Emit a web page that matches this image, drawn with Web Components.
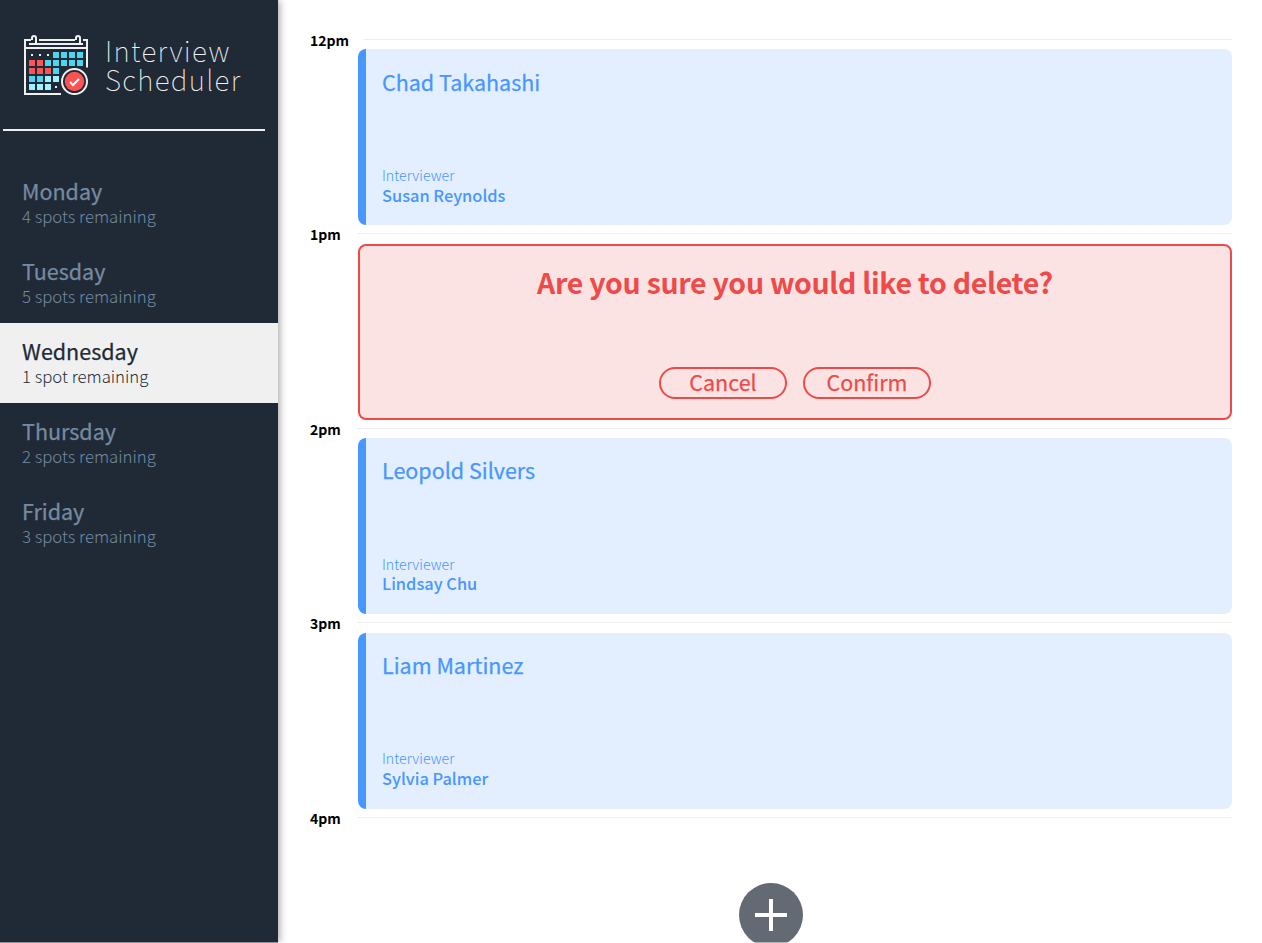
<!DOCTYPE html>
<html lang="en">
<head>
<meta charset="utf-8">
<title>Interview Scheduler</title>
<style>
  body { margin: 0; height: 943px; overflow: hidden; background: #fff; font-family: "Noto Sans CJK JP", "Noto Sans", sans-serif; }
</style>
</head>
<body>
<scheduler-app>
  <scheduler-sidebar slot="sidebar">
    <day-item spots="4 spots remaining">Monday</day-item>
    <day-item spots="5 spots remaining">Tuesday</day-item>
    <day-item spots="1 spot remaining" selected>Wednesday</day-item>
    <day-item spots="2 spots remaining">Thursday</day-item>
    <day-item spots="3 spots remaining">Friday</day-item>
  </scheduler-sidebar>
  <time-slot time="12pm"><appointment-card interviewer="Susan Reynolds">Chad Takahashi</appointment-card></time-slot>
  <time-slot time="1pm"><confirm-card>Are you sure you would like to delete?</confirm-card></time-slot>
  <time-slot time="2pm"><appointment-card interviewer="Lindsay Chu">Leopold Silvers</appointment-card></time-slot>
  <time-slot time="3pm"><appointment-card interviewer="Sylvia Palmer">Liam Martinez</appointment-card></time-slot>
  <time-slot time="4pm"><add-button></add-button></time-slot>
</scheduler-app>
<script>
const define = (name, html, setup) => customElements.define(name, class extends HTMLElement {
  connectedCallback() {
    if (this.shadowRoot) return;
    const root = this.attachShadow({ mode: "open" });
    root.innerHTML = html;
    if (setup) setup(this, root);
  }
});

define("scheduler-app", `
<style>
  :host { position: relative; display: flex; height: 943px; overflow: hidden; }
  :host::after { content: ""; position: absolute; left: 0; right: 0; bottom: 0; height: 1px; background: rgba(255,255,255,.5); }
  main { flex: 1; padding: 31.06px 30px 0 32px; }
</style>
<slot name="sidebar"></slot><main><slot></slot></main>`);

define("scheduler-sidebar", `
<style>
  :host { display: block; flex: none; width: 278px; background: #202a36; box-shadow: 1px 0 8px rgba(0,0,0,.4); }
  hr { margin: 33px 13px 32px 3px; border: 0; height: 2px; background: #f0f0f0; }
  nav { display: block; }
</style>
<scheduler-logo></scheduler-logo><hr><nav><slot></slot></nav>`);

define("scheduler-logo", `
<style>
  :host { display: flex; padding: 34px 0 0 23px; height: 62px; box-sizing: content-box; }
  svg { flex: none; }
  .name { margin: 2px 0 0 16px; color: #f0f0f0; font-weight: 100; font-size: 28px; line-height: 29px; letter-spacing: 1.3px; white-space: nowrap; }
  .name span { display: block; }
</style>
<svg width="66" height="62" viewBox="23 34 66 62" fill="none">
  <g stroke="#f0f0f0" stroke-width="2">
    <path d="M31 40H25V94H61M39 40H75M83 40H87V67.5M29 44H83M25 48H87"/>
    <path d="M32 40V38a2 2 0 0 1 4 0V43M76 40V38a2 2 0 0 1 4 0V43"/>
    <circle cx="74.5" cy="81.5" r="12.5"/>
  </g>
  <path fill="#f0f0f0" d="M31 54h2v2h-2zM39 54h2v2h-2zM47 54h2v2h-2zM55 86h2v2h-2z"/>
  <path fill="#4dd4ee" d="M53 52h6v6h-6zM61 52h6v6h-6zM69 52h6v6h-6zM77 52h6v6h-6zM45 60h6v6h-6zM53 60h6v6h-6zM61 60h6v6h-6zM69 60h6v6h-6zM77 60h6v6h-6zM53 68h6v6h-6zM29 76h6v6h-6zM37 76h6v6h-6z"/>
  <path fill="#a0f0ff" d="M45 76h6v6h-6zM53 76h6v6h-6zM29 84h6v6h-6zM37 84h6v6h-6zM45 84h6v6h-6z"/>
  <path fill="#ff5252" d="M29 60h6v6h-6zM37 60h6v6h-6zM29 68h6v6h-6zM37 68h6v6h-6zM45 68h6v6h-6z"/>
  <circle cx="74.5" cy="81.5" r="9.7" fill="#ff5252"/>
  <path d="M70 82l3 3 6-6" stroke="#fff" stroke-width="2"/>
</svg>
<div class="name"><span>Interview</span><span>Scheduler</span></div>`);

define("day-item", `
<style>
  :host { display: block; height: 80px; box-sizing: border-box; padding: 13px 0 0 22px; color: #768aa1; white-space: nowrap; }
  :host([selected]) { background: #f0f0f0; color: #202a36; }
  .day { font-size: 21.5px; font-weight: 400; line-height: 30px; -webkit-text-stroke: .25px currentColor; }
  .spots { font-size: 16.75px; font-weight: 300; line-height: 20px; }
</style>
<div class="day"><slot></slot></div><div class="spots"></div>`,
(el, root) => root.querySelector(".spots").textContent = el.getAttribute("spots"));

define("time-slot", `
<style>
  :host { display: block; }
  header { display: flex; height: 18.39px; }
  .time { flex: none; min-width: 47px; box-sizing: border-box; padding-right: 15px; margin-top: -1px; color: #000; font-size: 14px; font-weight: 700; line-height: 20px; white-space: nowrap; }
  .line { flex: 1; height: 1px; margin-top: 8px; background: #eee; }
  .body { padding-left: 48px; }
</style>
<header><div class="time"></div><div class="line"></div></header><div class="body"><slot></slot></div>`,
(el, root) => root.querySelector(".time").textContent = el.getAttribute("time"));

define("appointment-card", `
<style>
  :host { display: flex; flex-direction: column; justify-content: space-between; height: 176px; box-sizing: border-box; padding: 15.2px 16px 20.8px; border-left: 8px solid #4896ff; border-radius: 8px; background: #e3efff; color: #4896ff; white-space: nowrap; }
  .student { font-size: 21.5px; font-weight: 400; line-height: 34px; -webkit-text-stroke: .25px currentColor; }
  .label { font-size: 14.2px; font-weight: 300; line-height: 20px; }
  .interviewer { margin-top: -.4px; font-size: 16.4px; font-weight: 500; line-height: 20px; }
</style>
<div class="student"><slot></slot></div>
<div><div class="label">Interviewer</div><div class="interviewer"></div></div>`,
(el, root) => root.querySelector(".interviewer").textContent = el.getAttribute("interviewer"));

define("confirm-card", `
<style>
  :host { display: flex; flex-direction: column; align-items: center; justify-content: space-between; height: 176px; box-sizing: border-box; padding: 16px 0 19px; border: 2px solid #ee4a49; border-radius: 8px; background: #fbe3e3; color: #ee4a49; white-space: nowrap; }
  .message { font-size: 28.5px; font-weight: 700; line-height: 40px; letter-spacing: -.3px; }
  .actions { display: flex; gap: 16px; }
  button { width: 128px; height: 32px; box-sizing: border-box; margin: 0; padding: 0 0 3px; border: 2px solid #ee4a49; border-radius: 16px; background: none; color: inherit; font: 400 21.5px/25px "Noto Sans CJK JP", "Noto Sans", sans-serif; -webkit-text-stroke: .25px currentColor; }
</style>
<div class="message"><slot></slot></div>
<div class="actions"><button>Cancel</button><button>Confirm</button></div>`);

define("add-button", `
<style>
  :host { display: flex; justify-content: center; padding: 56px 48px 0 0; }
  svg { display: block; }
</style>
<svg width="64" height="64" viewBox="0 0 64 64"><circle cx="32" cy="32" r="32" fill="#646a74"/><path d="M32 16v32M16 32h32" stroke="#fff" stroke-width="4"/></svg>`);
</script>
</body>
</html>
